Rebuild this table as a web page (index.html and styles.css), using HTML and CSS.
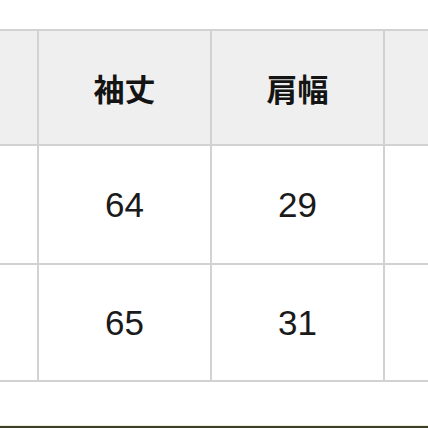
FILE: index.html
```html
<!DOCTYPE html>
<html lang="ja">
<head>
<meta charset="utf-8">
<link rel="stylesheet" href="styles.css">
</head>
<body>
<div class="page">
  <div class="grid">
    <div class="cell head"></div>
    <div class="cell head"><span class="jp">袖丈</span></div>
    <div class="cell head"><span class="jp">肩幅</span></div>
    <div class="cell head"></div>

    <div class="cell"></div>
    <div class="cell"><span class="num">64</span></div>
    <div class="cell"><span class="num">29</span></div>
    <div class="cell"></div>

    <div class="cell"></div>
    <div class="cell"><span class="num">65</span></div>
    <div class="cell"><span class="num">31</span></div>
    <div class="cell"></div>
  </div>
  <div class="footer"></div>
</div>
</body>
</html>
```
FILE: styles.css
```css
html, body {
  margin: 0;
  padding: 0;
  background: #ffffff;
}
.page {
  width: 428px;
  height: 428px;
  overflow: hidden;
  display: flex;
  flex-direction: column;
  box-sizing: border-box;
  padding-top: 29px;
}
.grid {
  display: grid;
  grid-template-columns: 172px 171px 171px 171px;
  grid-template-rows: 113px 117px 115px;
  gap: 2px;
  padding: 2px 0;
  background: #d2d2d2;
  width: max-content;
  margin-left: -135px;
}
.cell {
  background: #ffffff;
  display: flex;
  align-items: center;
  justify-content: center;
}
.cell.head {
  background: #efefef;
}
.jp {
  font-family: "Noto Sans CJK JP", "Noto Sans CJK SC", sans-serif;
  font-weight: 700;
  font-size: 31px;
  color: #141414;
  letter-spacing: 0;
}
.num {
  font-family: "Liberation Sans", Arial, sans-serif;
  font-size: 35px;
  color: #1a1a1a;
}
.footer {
  margin-top: auto;
  height: 2px;
  border-top: 1px solid #eef0d8;
  background: #3e3e2a;
}
```
